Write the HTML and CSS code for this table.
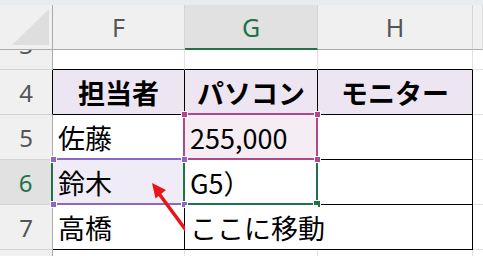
FILE: index.html
```html
<!DOCTYPE html>
<html lang="ja">
<head>
<meta charset="utf-8">
<link rel="stylesheet" href="styles.css">
</head>
<body>
<div class="wrap">
  <div class="topbar"></div>
  <div class="sheet">
    <div class="corner"><div class="tri"></div></div>
    <div class="ch">F</div>
    <div class="ch ch-sel">G</div>
    <div class="ch">H</div>
    <div class="ch ch-end"></div>

    <div class="rh rh3"><span>3</span></div>
    <div class="c b-bot"></div>
    <div class="c b-bot"></div>
    <div class="c b-bot"></div>
    <div class="c c-end"></div>

    <div class="rh rh-blk">4</div>
    <div class="c hd b-r b-bot">担当者</div>
    <div class="c hd b-r b-bot">パソコン</div>
    <div class="c hd b-r b-bot">モニター</div>
    <div class="c c-end"></div>

    <div class="rh">5</div>
    <div class="c tx b-r">佐藤</div>
    <div class="c tx pink b-r">255,000</div>
    <div class="c b-r b-bot"></div>
    <div class="c c-end"></div>

    <div class="rh rh-sel">6</div>
    <div class="c tx lav b-r">鈴木</div>
    <div class="c tx b-r">G5）</div>
    <div class="c b-r b-bot"></div>
    <div class="c c-end"></div>

    <div class="rh">7</div>
    <div class="c tx b-r b-bot">高橋</div>
    <div class="c tx over b-bot"><span>ここに移動</span></div>
    <div class="c b-r b-bot"></div>
    <div class="c c-end"></div>

    <div class="rh"></div>
    <div class="c"></div>
    <div class="c"></div>
    <div class="c"></div>
    <div class="c c-end"></div>
  </div>

  <div class="box box-green"></div>
  <div class="box box-purple"></div>
  <div class="box box-pink"></div>

  <div class="h h-purple" style="left:51px;top:157px"></div>
  <div class="h h-purple" style="left:51px;top:202px"></div>
  <div class="h h-purple" style="left:182px;top:202px"></div>
  <div class="h h-purple" style="left:182px;top:157px"></div>
  <div class="h h-green big" style="left:314px;top:201px"></div>
  <div class="h h-pink" style="left:182px;top:112px"></div>
  <div class="h h-pink" style="left:315px;top:112px"></div>
  <div class="h h-pink" style="left:315px;top:157px"></div>

  <svg class="arrow" width="483" height="256" viewBox="0 0 483 256">
    <line x1="188" y1="233" x2="160" y2="195" stroke="#e8141c" stroke-width="3.5" stroke-linecap="round"/>
    <polygon points="152,183 166,190 155.5,198.5" fill="#e8141c"/>
  </svg>
</div>
</body>
</html>
```

FILE: styles.css
```css
html, body {
  margin: 0;
  padding: 0;
  background: #ffffff;
  overflow: hidden;
}
.wrap {
  position: relative;
  width: 483px;
  height: 256px;
  overflow: hidden;
  font-family: "Noto Sans CJK JP", "Noto Sans", sans-serif;
}
.topbar {
  height: 5px;
  background: #e9ecef;
}
.sheet {
  display: grid;
  grid-template-columns: 53px 132px 133px 155px 10px;
  grid-template-rows: 45px 20px 45px 45px 45px 45px 20px;
}
.sheet > div {
  box-sizing: border-box;
  border-right: 1px solid #e1e1e1;
  border-bottom: 1px solid #e1e1e1;
  min-width: 0;
}
.corner {
  background: #f0f0f0;
  position: relative;
  border-bottom-color: #ababab !important;
  border-right-color: #ababab !important;
}
.tri {
  position: absolute;
  left: 12px;
  top: 4px;
  width: 37px;
  height: 36px;
  background: #dedede;
  clip-path: polygon(100% 0, 100% 100%, 0 100%);
}
.ch {
  background: #f0f0f0;
  color: #555555;
  font-family: "Noto Sans", sans-serif;
  font-size: 25px;
  display: flex;
  align-items: center;
  justify-content: center;
  border-right-color: #d4d4d4 !important;
  border-bottom-color: #ababab !important;
}
.ch-sel {
  background: #e1e1e1;
  color: #217346;
  border-bottom: 2px solid #217346 !important;
}
.ch-end { border-right-color: #dcdcdc !important; }
.rh {
  background: #f0f0f0;
  color: #555555;
  font-family: "Noto Sans", sans-serif;
  font-size: 24px;
  display: flex;
  align-items: center;
  justify-content: center;
  border-right-color: #ababab !important;
  border-bottom-color: #d4d4d4 !important;
  overflow: hidden;
}
.rh3 {
  align-items: flex-start;
}
.rh3 span {
  line-height: 24px;
  margin-top: -17px;
}
.rh-blk { border-right-color: #000 !important; }
.rh-sel {
  background: #e1e1e1;
  color: #217346;
  border-right: 2px solid #217346 !important;
}
.c {
  background: #ffffff;
  font-size: 27px;
  color: #000;
  display: flex;
  align-items: center;
  white-space: nowrap;
}
.c-end { border-right: none !important; }
.b-r { border-right-color: #000 !important; }
.b-bot { border-bottom-color: #000 !important; }
.hd {
  background: #ede6f2;
  font-weight: bold;
  justify-content: center;
}
.tx { padding-left: 5px; }
.pink { background: #f6ecf3; }
.lav { background: #f0ecf7; }
.over {
  overflow: visible;
  border-right: none !important;
  position: relative;
  z-index: 1;
}
.over span { background: transparent; }
.box {
  position: absolute;
  box-sizing: border-box;
}
.box-green {
  left: 183px;
  top: 158px;
  width: 135px;
  height: 47px;
  border: 2px solid #217346;
}
.box-purple {
  left: 53px;
  top: 158px;
  width: 132px;
  height: 47px;
  border-top: 2px solid #8b68c4;
  border-bottom: 2px solid #8b68c4;
}
.box-pink {
  left: 183px;
  top: 113px;
  width: 135px;
  height: 47px;
  border: 2px solid #b2468a;
}
.h {
  position: absolute;
  width: 5px;
  height: 5px;
  box-sizing: border-box;
  outline: 1px solid #ffffff;
}
.h-purple { background: #8b68c4; }
.h-pink { background: #b2468a; }
.h-green { background: #217346; }
.big { width: 6px; height: 6px; }
.arrow {
  position: absolute;
  left: 0;
  top: 0;
}
```
